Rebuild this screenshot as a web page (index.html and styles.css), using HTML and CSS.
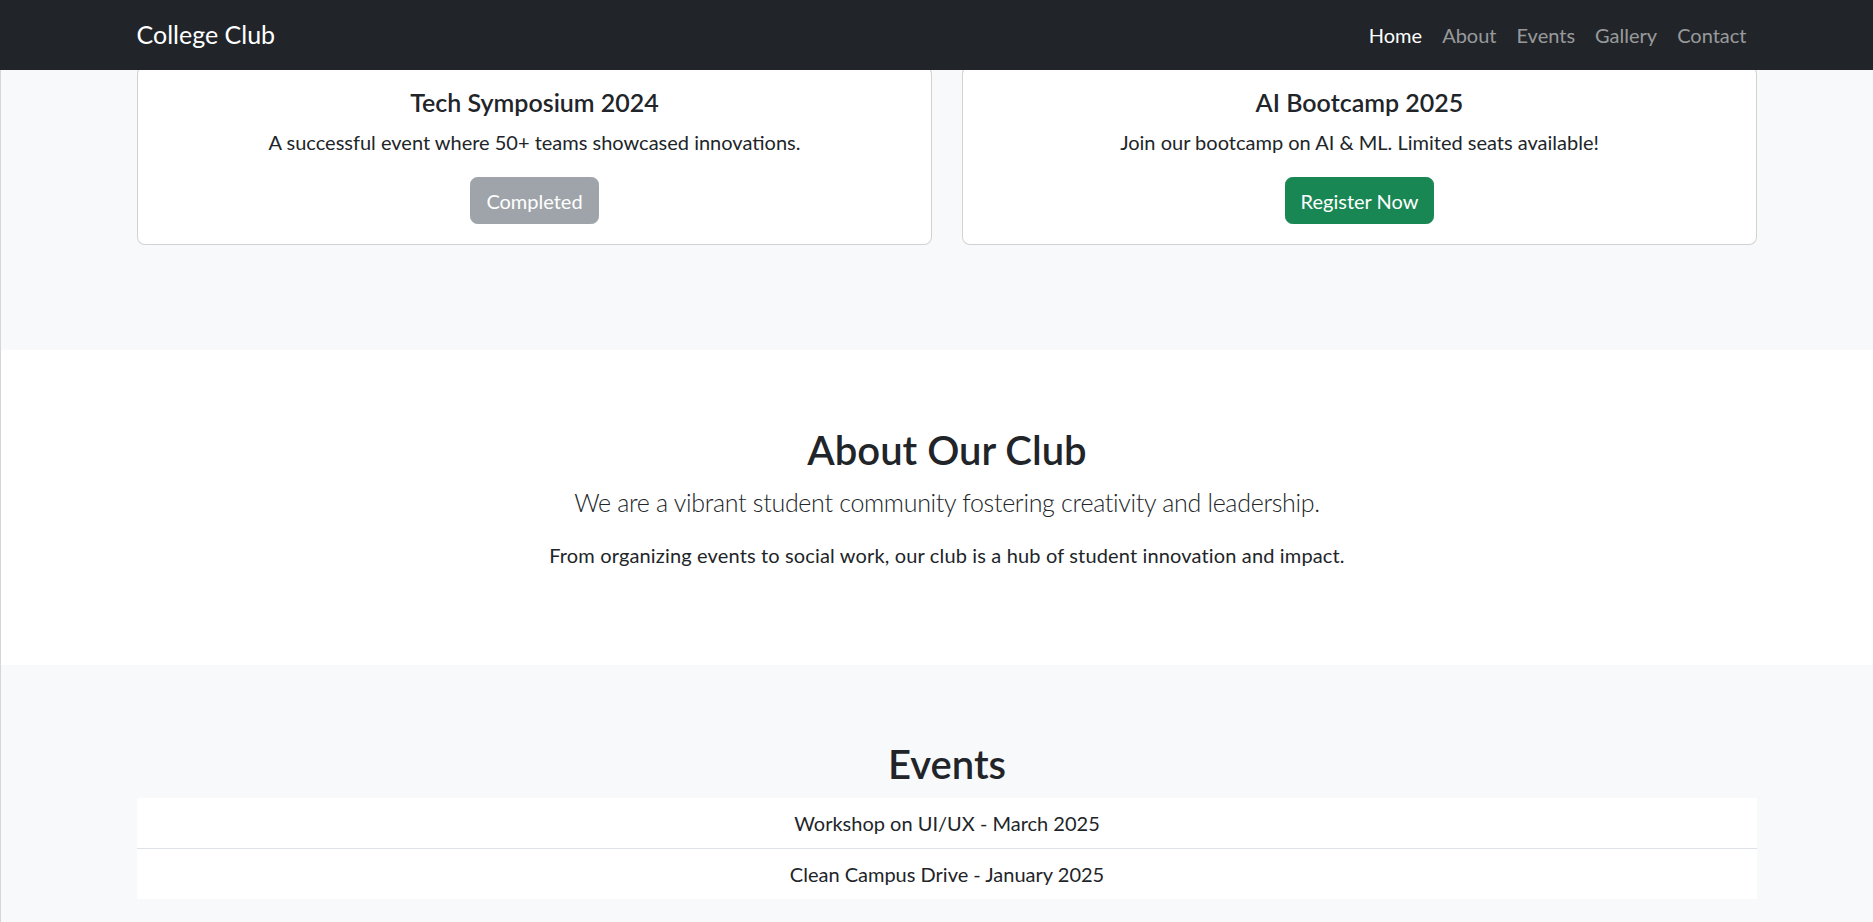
FILE: index.html
```html
<!DOCTYPE html>
<html lang="en">
<head>
<meta charset="utf-8">
<title>College Club</title>
<link rel="stylesheet" href="styles.css">
</head>
<body>
<nav class="navbar">
  <div class="container nav-inner">
    <a class="brand" href="#">College Club</a>
    <ul class="nav-links">
      <li><a class="nav-link active" href="#">Home</a></li>
      <li><a class="nav-link" href="#">About</a></li>
      <li><a class="nav-link" href="#">Events</a></li>
      <li><a class="nav-link" href="#">Gallery</a></li>
      <li><a class="nav-link" href="#">Contact</a></li>
    </ul>
  </div>
</nav>

<section class="section-gray highlights">
  <div class="container card-row">
    <div class="card">
      <h5 class="card-title">Tech Symposium 2024</h5>
      <p class="card-text">A successful event where 50+ teams showcased innovations.</p>
      <span class="btn btn-secondary">Completed</span>
    </div>
    <div class="card">
      <h5 class="card-title">AI Bootcamp 2025</h5>
      <p class="card-text">Join our bootcamp on AI &amp; ML. Limited seats available!</p>
      <a class="btn btn-success" href="#">Register Now</a>
    </div>
  </div>
</section>

<section class="section-white about">
  <div class="container text-center">
    <h2 class="section-title">About Our Club</h2>
    <p class="lead">We are a vibrant student community fostering creativity and leadership.</p>
    <p class="body-text">From organizing events to social work, our club is a hub of student innovation and impact.</p>
  </div>
</section>

<section class="section-gray events">
  <div class="container text-center">
    <h2 class="section-title">Events</h2>
    <ul class="list-group">
      <li class="list-item">Workshop on UI/UX - March 2025</li>
      <li class="list-item">Clean Campus Drive - January 2025</li>
    </ul>
  </div>
</section>
</body>
</html>
```

FILE: styles.css
```css
* { box-sizing: border-box; }

html, body {
  margin: 0;
  padding: 0;
}

body {
  font-family: Lato, "Open Sans", sans-serif;
  font-size: 20px;
  line-height: 1.5;
  color: #212529;
  background: #f8f9fa;
  border-left: 1px solid #d6d6d6;
}

.container {
  width: 1620px;
  margin-left: calc(50% - 800px);
}

.text-center { text-align: center; }

/* Navbar */
.navbar {
  position: fixed;
  top: 0;
  left: 0;
  right: 0;
  height: 70px;
  background: #212529;
  z-index: 10;
}

.nav-inner {
  height: 70px;
  display: flex;
  align-items: center;
  justify-content: space-between;
}

.brand {
  color: #fff;
  text-decoration: none;
  font-size: 25px;
  line-height: 37.5px;
  padding: 4px 0;
}

.nav-links {
  list-style: none;
  margin: 0;
  padding: 0;
  display: flex;
}

.nav-link {
  display: block;
  padding: 10px;
  color: rgba(255, 255, 255, 0.55);
  text-decoration: none;
  font-size: 20px;
  line-height: 30px;
}

.nav-link.active { color: #fff; }

/* Sections */
.section-gray { background: #f8f9fa; }
.section-white { background: #fff; }

.highlights {
  padding-top: 66px;
  padding-bottom: 105px;
}

.card-row {
  display: grid;
  grid-template-columns: 1fr 1fr;
  gap: 30px;
}

.card {
  background: #fff;
  border: 1px solid rgba(0, 0, 0, 0.175);
  border-radius: 8px;
  padding: 20px;
  text-align: center;
}

.card-title {
  margin: 0 0 10px;
  font-size: 25px;
  font-weight: 600;
  line-height: 1.2;
}

.card-text {
  margin: 0 0 20px;
  line-height: 30px;
}

.btn {
  display: inline-block;
  padding: 7.5px 15px;
  font-size: 20px;
  line-height: 30px;
  border: 1px solid transparent;
  border-radius: 7.5px;
  color: #fff;
  text-decoration: none;
  vertical-align: top;
}

.btn-secondary {
  background: #6c757d;
  border-color: #6c757d;
  opacity: 0.65;
}

.btn-success {
  background: #198754;
  border-color: #198754;
}

.about {
  padding-top: 76px;
  padding-bottom: 75px;
}

.section-title {
  margin: 0 0 10px;
  font-size: 40px;
  font-weight: 600;
  line-height: 1.2;
}

.lead {
  margin: 0 0 18px;
  font-size: 25px;
  font-weight: 300;
  line-height: 1.5;
  letter-spacing: -0.3px;
}

.body-text {
  margin: 0 0 20px;
  line-height: 30px;
  letter-spacing: 0.15px;
}

.events {
  padding-top: 75px;
  padding-bottom: 74px;
}

.list-group {
  list-style: none;
  margin: 0;
  padding: 0;
}

.list-item {
  background: #fff;
  padding: 10px 20px;
  line-height: 30px;
  border-bottom: 1px solid #dee2e6;
}

.list-item:last-child { border-bottom: 0; }
```
